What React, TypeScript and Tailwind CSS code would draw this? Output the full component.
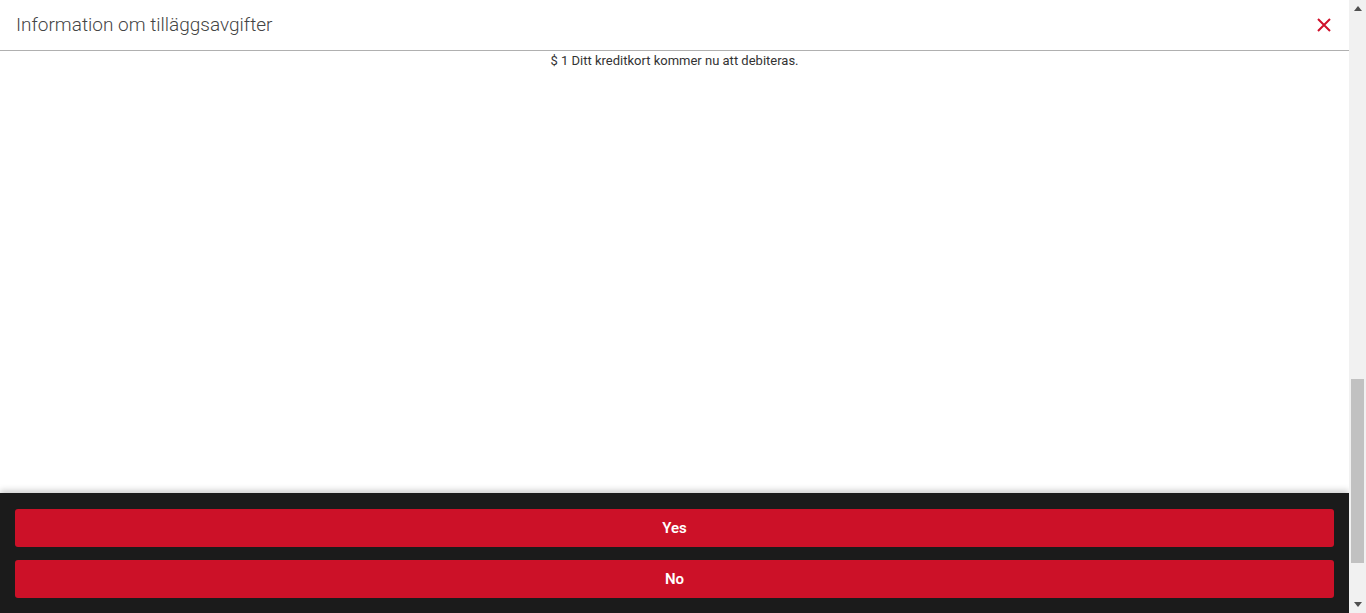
import React from 'react';

const App: React.FC = () => {
    return (
        <div className="flex h-[613px] w-full overflow-hidden bg-white font-['Roboto',sans-serif]">
            <div className="flex flex-1 flex-col">
                <div className="flex h-[51px] shrink-0 items-center justify-between border-b border-[#b0b0b0] pl-4 pr-[15px]">
                    <h1 className="text-[19px] font-light text-[#444444]">Information om tilläggsavgifter</h1>
                    <button className="flex h-5 w-5 items-center justify-center" aria-label="Close">
                        <svg width="14" height="14" viewBox="0 0 14 14">
                            <path d="M1 1 L13 13 M13 1 L1 13" stroke="#d0112b" strokeWidth="2" />
                        </svg>
                    </button>
                </div>
                <div className="flex-1 text-center text-[13px] text-[#333333]">
                    $ 1 Ditt kreditkort kommer nu att debiteras.
                </div>
                <div className="flex h-[120px] shrink-0 flex-col gap-[13px] bg-[#1b1b1b] px-[15px] pt-4 shadow-[0_-3px_6px_rgba(0,0,0,0.18)]">
                    <button className="h-[38px] rounded-[3px] bg-[#cc1128] text-[15px] font-semibold text-white">Yes</button>
                    <button className="h-[38px] rounded-[3px] bg-[#cc1128] text-[15px] font-semibold text-white">No</button>
                </div>
            </div>
            <div className="flex w-[17px] shrink-0 flex-col bg-[#f1f1f1]">
                <div className="flex h-[17px] items-center justify-center">
                    <svg width="8" height="5" viewBox="0 0 8 5"><path d="M0 5 L4 0 L8 5 Z" fill="#505050" /></svg>
                </div>
                <div className="flex-1 pt-[362px] pb-[33px] px-[2px]">
                    <div className="h-full bg-[#c1c1c1]" />
                </div>
                <div className="flex h-[17px] items-center justify-center">
                    <svg width="8" height="5" viewBox="0 0 8 5"><path d="M0 0 L8 0 L4 5 Z" fill="#505050" /></svg>
                </div>
            </div>
        </div>
    );
};

export default App;
